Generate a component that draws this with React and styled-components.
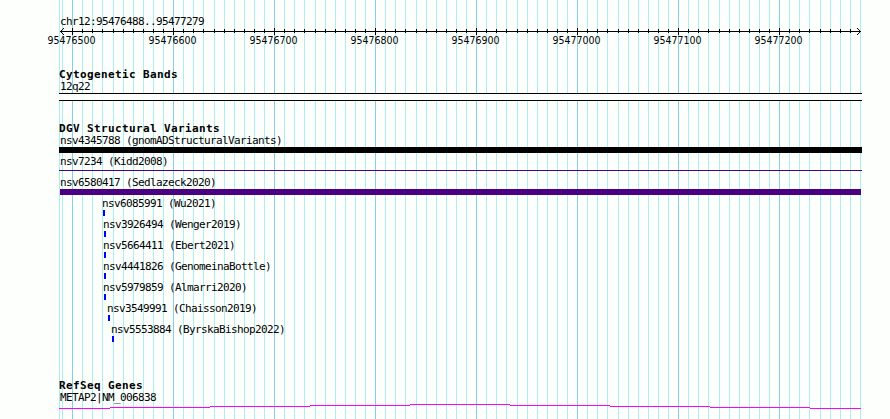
import React from "react";
import styled, { createGlobalStyle, css } from "styled-components";

const START = 95476488;
const END = 95477279;
const LEFT = 60;
const RIGHT = 860;

const toX = (pos) =>
  Math.round(LEFT + ((pos - START) * (RIGHT - LEFT)) / (END - START + 1));

const ticks = [];
for (let pos = Math.ceil(START / 10) * 10; pos < END; pos += 10) {
  ticks.push({ pos, x: toX(pos), major: pos % 100 === 0 });
}

const variants = [
  { name: "nsv6085991 (Wu2021)", x: 103 },
  { name: "nsv3926494 (Wenger2019)", x: 104 },
  { name: "nsv5664411 (Ebert2021)", x: 104 },
  { name: "nsv4441826 (GenomeinaBottle)", x: 104 },
  { name: "nsv5979859 (Almarri2020)", x: 104 },
  { name: "nsv3549991 (Chaisson2019)", x: 108 },
  { name: "nsv5553884 (ByrskaBishop2022)", x: 112 },
];

const intronSteps = [4, 3, 2, 1, 0, 1, 2, 3, 4];

const GlobalStyle = createGlobalStyle`
  body { margin: 0; background: #fdfffc; }
`;

const Browser = styled.main`
  position: relative;
  isolation: isolate;
  display: flex;
  flex-direction: column;
  box-sizing: border-box;
  width: 890px;
  height: 419px;
  padding-top: 15px;
  overflow: hidden;
  background: #fdfffc;
  color: #000;
`;

const GridLines = styled.svg`
  position: absolute;
  inset: 0;
  z-index: -1;
`;

const GridLine = styled.rect`
  fill: ${(p) => (p.$major ? "#87ceeb" : "#afeeee")};
`;

const mono = css`
  font-family: "DejaVu Sans Mono", monospace;
  font-size: 11px;
  letter-spacing: -0.622px;
  white-space: pre;
`;

const Label = styled.div`
  ${mono}
  height: 12px;
  line-height: 12px;
  padding-left: ${(p) => p.$x}px;
`;

const RangeLabel = styled(Label)`
  line-height: 14px;
`;

const Heading = styled.h2`
  margin: 0;
  padding-left: 59px;
  height: 13px;
  font: bold 11px/13px "DejaVu Sans Mono", monospace;
  letter-spacing: 0.378px;
  white-space: pre;
`;

const Ruler = styled.svg`
  display: block;
  flex: none;
`;

const TickLabel = styled.text`
  font-family: "DejaVu Sans Condensed", "DejaVu Sans", sans-serif;
  font-stretch: condensed;
  font-size: 10.5px;
`;

const Track = styled.section`
  flex: none;
  margin-top: ${(p) => p.$gap}px;
`;

const Band = styled.div`
  box-sizing: border-box;
  width: 803px;
  height: 8px;
  margin-left: 59px;
  border: solid #000;
  border-width: 1px 0;
  background: #fdfffc;
`;

const Feature = styled.div`
  height: 21px;
`;

const Bar = styled.div`
  width: ${(p) => p.$width}px;
  height: ${(p) => p.$height || 6}px;
  margin: ${(p) => p.$top || 0}px 0 0 ${(p) => p.$x}px;
  background: ${(p) => p.$color};
`;

const GeneLine = styled.svg`
  display: block;
`;

export default function App() {
  return (
    <Browser>
      <GlobalStyle />
      <GridLines width="890" height="419" shapeRendering="crispEdges">
        <GridLine x={59} width="1" height="419" />
        {ticks.map((t) => (
          <GridLine key={t.pos} x={t.x} width="1" height="419" $major={t.major} />
        ))}
        <GridLine x={RIGHT} width="1" height="419" />
      </GridLines>

      <RangeLabel $x={60}>chr12:95476488..95477279</RangeLabel>
      <Ruler width="890" height="21">
        <g shapeRendering="crispEdges">
          <rect x={LEFT} y="4" width={RIGHT - LEFT + 1} height="1" />
          {ticks.slice(1).map((t) => (
            <rect
              key={t.pos}
              x={t.x}
              y={t.major ? 1 : 2}
              width="1"
              height={t.major ? 7 : 4}
            />
          ))}
        </g>
        <path
          d="M64 1 60.5 4.5 64 8M857 1 860.5 4.5 857 8"
          fill="none"
          stroke="#000"
        />
        {ticks
          .filter((t) => t.major)
          .map((t) => (
            <TickLabel key={t.pos} x={t.x - 24.5} y="17">
              {t.pos}
            </TickLabel>
          ))}
      </Ruler>

      <Track $gap={20}>
        <Heading>Cytogenetic Bands</Heading>
        <Label $x={60}>12q22</Label>
        <Band />
      </Track>

      <Track $gap={21}>
        <Heading>DGV Structural Variants</Heading>
        <Feature>
          <Label $x={60}>nsv4345788 (gnomADStructuralVariants)</Label>
          <Bar $x={59} $width={803} $color="#000" />
        </Feature>
        <Feature>
          <Label $x={60}>nsv7234 (Kidd2008)</Label>
          <Bar $x={59} $width={803} $height={1} $top={2} $color="#4b0082" />
        </Feature>
        <Feature>
          <Label $x={60}>nsv6580417 (Sedlazeck2020)</Label>
          <Bar $x={60} $width={801} $color="#4b0082" />
        </Feature>
        {variants.map((v) => (
          <Feature key={v.name}>
            <Label $x={v.x - 1}>{v.name}</Label>
            <Bar $x={v.x} $width={2} $color="#0000ff" />
          </Feature>
        ))}
      </Track>

      <Track $gap={34}>
        <Heading>RefSeq Genes</Heading>
        <Label $x={60}>METAP2|NM_006838</Label>
        <GeneLine width="890" height="15" shapeRendering="crispEdges" fill="#ff00ff">
          {intronSteps.map((y, i) => {
            const x = i === 0 ? 59 : 10 + i * 100;
            const end = i === 8 ? 861 : 110 + i * 100;
            return <rect key={i} x={x} y={y} width={end - x} height="1" />;
          })}
        </GeneLine>
      </Track>
    </Browser>
  );
}
